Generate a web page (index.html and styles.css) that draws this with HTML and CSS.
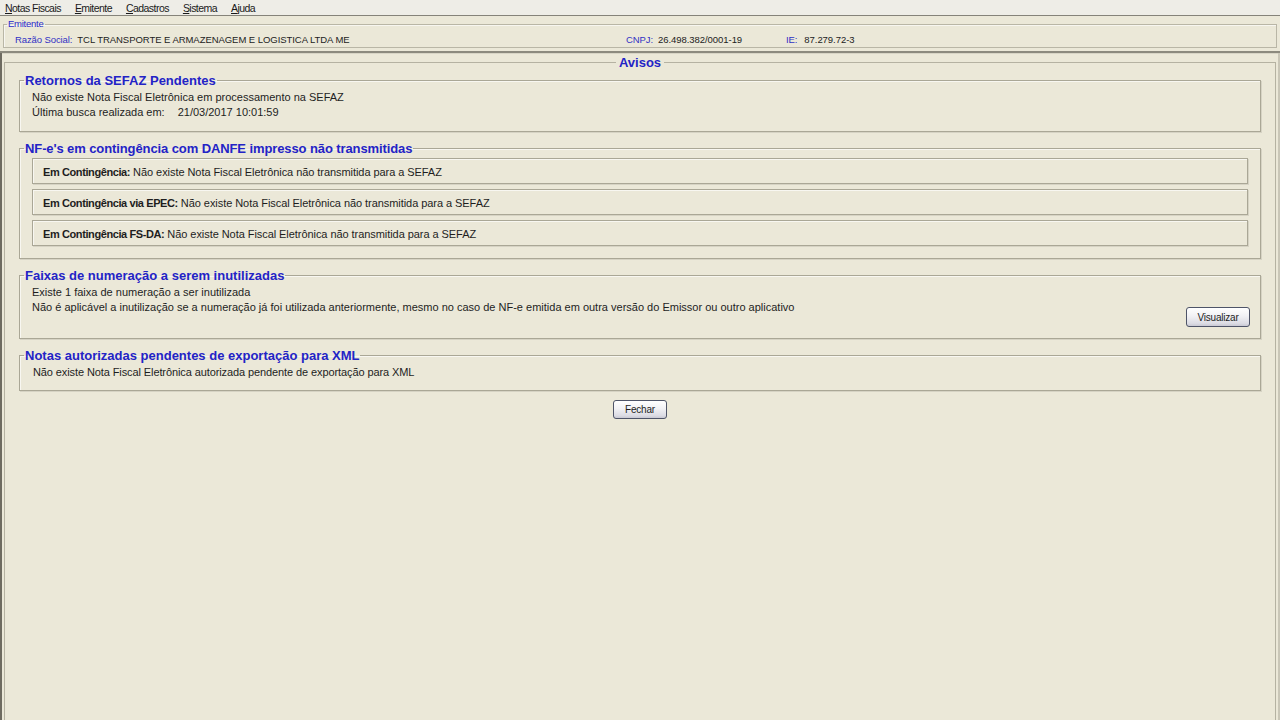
FILE: index.html
```html
<!DOCTYPE html>
<html lang="pt-BR">
<head>
<meta charset="utf-8">
<title>Avisos</title>
<link rel="stylesheet" href="styles.css">
</head>
<body>
<div class="menubar">
  <span class="menu"><u>N</u>otas Fiscais</span>
  <span class="menu"><u>E</u>mitente</span>
  <span class="menu"><u>C</u>adastros</span>
  <span class="menu"><u>S</u>istema</span>
  <span class="menu"><u>A</u>juda</span>
</div>

<div class="emitente-area">
  <fieldset class="emitente">
    <legend>Emitente</legend>
    <div class="emit-row">
      <div class="emit-group g-razao"><span class="emit-label">Razão Social:</span><span class="emit-value">TCL TRANSPORTE E ARMAZENAGEM E LOGISTICA LTDA ME</span></div>
      <div class="emit-group g-cnpj"><span class="emit-label">CNPJ:</span><span class="emit-value">26.498.382/0001-19</span></div>
      <div class="emit-group g-ie"><span class="emit-label ie-label">IE:</span><span class="emit-value">87.279.72-3</span></div>
    </div>
  </fieldset>
</div>

<div class="main">
  <fieldset class="avisos">
    <legend>Avisos</legend>

    <fieldset class="group">
      <legend>Retornos da SEFAZ Pendentes</legend>
      <div class="group-body">
        <div class="line">Não existe Nota Fiscal Eletrônica em processamento na SEFAZ</div>
        <div class="line">Última busca realizada em:<span class="date">21/03/2017 10:01:59</span></div>
      </div>
    </fieldset>

    <fieldset class="group">
      <legend class="tight">NF-e's em contingência com DANFE impresso não transmitidas</legend>
      <div class="group-body boxes">
        <div class="box"><b>Em Contingência:</b>&nbsp;Não existe Nota Fiscal Eletrônica não transmitida para a SEFAZ</div>
        <div class="box"><b>Em Contingência via EPEC:</b>&nbsp;Não existe Nota Fiscal Eletrônica não transmitida para a SEFAZ</div>
        <div class="box"><b>Em Contingência FS-DA:</b>&nbsp;Não existe Nota Fiscal Eletrônica não transmitida para a SEFAZ</div>
      </div>
    </fieldset>

    <fieldset class="group">
      <legend>Faixas de numeração a serem inutilizadas</legend>
      <div class="group-body faixas">
        <div class="faixas-text">
          <div class="line">Existe 1 faixa de numeração a ser inutilizada</div>
          <div class="line">Não é aplicável a inutilização se a numeração já foi utilizada anteriormente, mesmo no caso de NF-e emitida em outra versão do Emissor ou outro aplicativo</div>
        </div>
        <button class="btn btn-visualizar" type="button">Visualizar</button>
      </div>
    </fieldset>

    <fieldset class="group">
      <legend>Notas autorizadas pendentes de exportação para XML</legend>
      <div class="group-body notas">
        <div class="line">Não existe Nota Fiscal Eletrônica autorizada pendente de exportação para XML</div>
      </div>
    </fieldset>

    <div class="actions">
      <button class="btn btn-fechar" type="button">Fechar</button>
    </div>
  </fieldset>
</div>
</body>
</html>
```

FILE: styles.css
```css
* { box-sizing: border-box; }

html, body {
  margin: 0;
  padding: 0;
  height: 100%;
}

body {
  background: #ebe8d8;
  font-family: "Liberation Sans", Arial, sans-serif;
  color: #1e1e1e;
  font-size: 11px;
  overflow: hidden;
}

/* ---------- menu bar ---------- */
.menubar {
  height: 16px;
  background: #eeede7;
  border-bottom: 1px solid #85837a;
  display: flex;
  align-items: center;
  padding-left: 5px;
  font-size: 10.5px;
  letter-spacing: -0.55px;
  color: #1a1a1a;
}
.menu { margin-right: 14px; line-height: 14px; }
.menu u { text-decoration: underline; text-underline-offset: 1px; }

/* ---------- emitente ---------- */
.emitente-area {
  padding: 2px 3px 3px 3px;
  border-bottom: 2px solid #8c8a7e;
  box-shadow: 0 1px 0 #d8d5c6;
}
.emitente {
  margin: 0;
  padding: 0 0 1px 11px;
  border: 1px solid #b9b6a6;
  box-shadow: inset 1px 1px 0 #f7f6f0;
  min-width: 0;
}
.emitente legend {
  margin-left: -8px;
  padding: 0 1px;
  font-size: 9.5px;
  line-height: 12px;
  color: #2a2acb;
  letter-spacing: -0.25px;
}
.emit-row {
  display: flex;
  height: 15px;
  align-items: center;
  font-size: 9.5px;
  margin-top: 2px;
  margin-bottom: -1px;
}
.emit-group { display: flex; }
.g-razao { width: 611px; }
.g-cnpj { width: 160px; }
.emit-label { color: #3131c4; margin-right: 5px; letter-spacing: -0.1px; }
.ie-label { margin-right: 7px; }
.emit-value { color: #222; letter-spacing: -0.05px; }

/* ---------- main / avisos ---------- */
.main {
  height: calc(100% - 52px);
  border-left: 2px solid #6e6b61;
  border-right: 2px solid #c9c6b7;
  padding: 2px 2px 0 2px;
}
.avisos {
  margin: 0;
  height: 100%;
  padding: 0 14px;
  border: 1px solid #b5b2a2;
  border-bottom: none;
  min-width: 0;
}
.avisos > legend {
  margin: 0 auto;
  padding: 0 3px;
  font-size: 13px;
  font-weight: bold;
  line-height: 15px;
  color: #2323c6;
}

.group {
  margin: 3px 0 0 0;
  padding: 0;
  border: 1px solid #aaa796;
  box-shadow: 1px 1px 0 #d6d3c4, inset 1px 1px 0 #f8f7f1;
  min-width: 0;
}
.group + .group { margin-top: 9px; }
.group > legend {
  margin-left: 4px;
  padding: 0 1px;
  font-size: 13px;
  font-weight: bold;
  line-height: 15px;
  color: #2323c6;
}
.group > legend.tight { letter-spacing: -0.1px; }
.group-body {
  padding: 2px 12px 11px 12px;
}
.line { line-height: 15px; white-space: nowrap; }
.date { margin-left: 13px; }

.boxes {
  display: flex;
  flex-direction: column;
  gap: 5px;
  padding-bottom: 12px;
}
.box {
  height: 26px;
  padding: 1px 0 0 10px;
  display: flex;
  align-items: center;
  border: 1px solid #aaa796;
  box-shadow: 1px 1px 0 #d6d3c4, inset 1px 1px 0 #f8f7f1;
  white-space: nowrap;
  letter-spacing: -0.06px;
}
.box b { font-weight: bold; letter-spacing: -0.4px; }

.faixas {
  display: flex;
  align-items: flex-end;
  justify-content: space-between;
  padding-right: 10px;
}
.faixas-text { align-self: flex-start; }

.notas { padding-left: 13px; padding-bottom: 10px; letter-spacing: -0.1px; }

/* ---------- buttons ---------- */
.btn {
  font-family: "Liberation Sans", Arial, sans-serif;
  font-size: 10px;
  color: #1e1e1e;
  border: 1px solid #4e5468;
  border-radius: 3px;
  background: linear-gradient(#ffffff, #f1f1f4 45%, #dcdce4 85%, #c9c9d4);
  padding: 0;
  letter-spacing: -0.2px;
}
.btn-visualizar {
  width: 64px;
  height: 20px;
  margin-top: 22px;
}
.actions {
  display: flex;
  justify-content: center;
  padding-top: 9px;
}
.btn-fechar {
  width: 54px;
  height: 19px;
}
```
